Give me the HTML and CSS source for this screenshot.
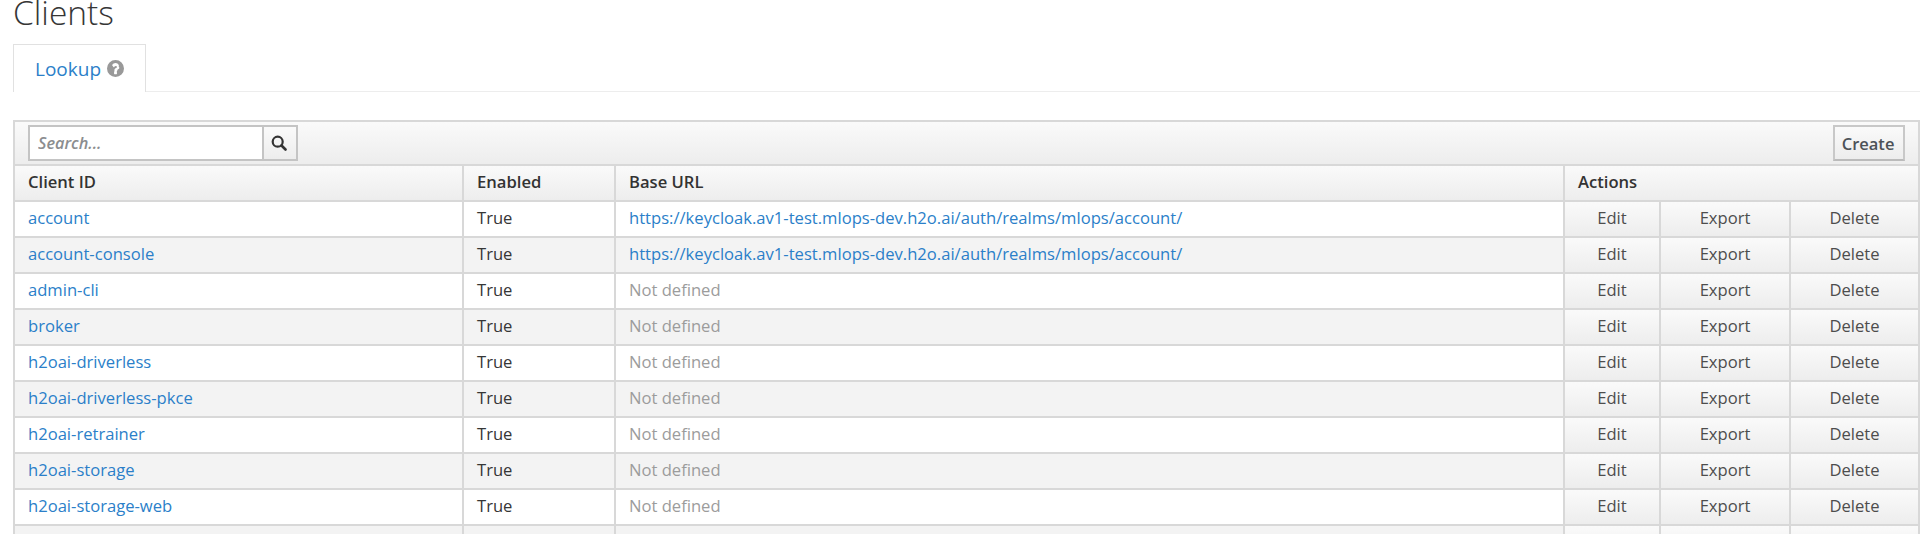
FILE: index.html
```html
<!DOCTYPE html>
<html lang="en">
<head>
<meta charset="utf-8">
<title>Clients</title>
<link rel="stylesheet" href="styles.css">
</head>
<body>
<h1 class="title">Clients</h1>
<ul class="tabs">
  <li class="tab"><a class="tab-link" href="#">Lookup</a>
    <svg class="help" viewBox="0 0 1536 1536" width="17" height="17"><path fill="#999" d="M768 0a768 768 0 1 0 0 1536A768 768 0 0 0 768 0zm128 1248q0 14-9 23t-23 9H672q-14 0-23-9t-9-23v-192q0-14 9-23t23-9h192q14 0 23 9t9 23v192zm228-537q-14 42-45 76t-67 56q-37 22-62 49t-22 48v36q0 14-9 23t-23 9H704q-14 0-23-9t-9-23v-68q0-62 47-113t103-77q42-19 60-40t18-54q0-30-33-53t-76-23q-46 0-77 21-25 18-76 82-9 11-22 11-9 0-17-5L467 478q-9-7-11-17t4-20q107-177 310-177 53 0 107 20t97 55q43 35 70 85t27 110q0 40-14 77z"/></svg>
  </li>
</ul>
<table class="grid">
  <colgroup>
    <col class="col-id"><col class="col-enabled"><col class="col-url"><col class="col-edit"><col class="col-export"><col class="col-delete">
  </colgroup>
  <thead>
    <tr class="toolbar-row">
      <th colspan="6">
        <div class="toolbar">
          <div class="search">
            <input class="search-input" type="text" placeholder="Search...">
            <button class="search-btn" type="button" aria-label="Search">
              <svg viewBox="0 0 16 16" width="16" height="16"><circle cx="6.7" cy="6.7" r="5" fill="none" stroke="#333" stroke-width="2.2"/><path d="M10.5 10.5l4 4" stroke="#333" stroke-width="2.6" stroke-linecap="round"/></svg>
            </button>
          </div>
          <button class="create" type="button">Create</button>
        </div>
      </th>
    </tr>
    <tr class="head-row">
      <th>Client ID</th><th>Enabled</th><th>Base URL</th><th colspan="3">Actions</th>
    </tr>
  </thead>
  <tbody>
    <tr><td><a href="#">account</a></td><td>True</td><td><a href="#">https://keycloak.av1-test.mlops-dev.h2o.ai/auth/realms/mlops/account/</a></td><td class="action">Edit</td><td class="action">Export</td><td class="action">Delete</td></tr>
    <tr><td><a href="#">account-console</a></td><td>True</td><td><a href="#">https://keycloak.av1-test.mlops-dev.h2o.ai/auth/realms/mlops/account/</a></td><td class="action">Edit</td><td class="action">Export</td><td class="action">Delete</td></tr>
    <tr><td><a href="#">admin-cli</a></td><td>True</td><td class="muted">Not defined</td><td class="action">Edit</td><td class="action">Export</td><td class="action">Delete</td></tr>
    <tr><td><a href="#">broker</a></td><td>True</td><td class="muted">Not defined</td><td class="action">Edit</td><td class="action">Export</td><td class="action">Delete</td></tr>
    <tr><td><a href="#">h2oai-driverless</a></td><td>True</td><td class="muted">Not defined</td><td class="action">Edit</td><td class="action">Export</td><td class="action">Delete</td></tr>
    <tr><td><a href="#">h2oai-driverless-pkce</a></td><td>True</td><td class="muted">Not defined</td><td class="action">Edit</td><td class="action">Export</td><td class="action">Delete</td></tr>
    <tr><td><a href="#">h2oai-retrainer</a></td><td>True</td><td class="muted">Not defined</td><td class="action">Edit</td><td class="action">Export</td><td class="action">Delete</td></tr>
    <tr><td><a href="#">h2oai-storage</a></td><td>True</td><td class="muted">Not defined</td><td class="action">Edit</td><td class="action">Export</td><td class="action">Delete</td></tr>
    <tr><td><a href="#">h2oai-storage-web</a></td><td>True</td><td class="muted">Not defined</td><td class="action">Edit</td><td class="action">Export</td><td class="action">Delete</td></tr>
    <tr class="cut-row"><td></td><td></td><td></td><td class="action"></td><td class="action"></td><td class="action"></td></tr>
  </tbody>
</table>
</body>
</html>
```

FILE: styles.css
```css
html, body {
  margin: 0;
  height: 534px;
  overflow: hidden;
  background: #fff;
}
body {
  padding: 0 2px 0 13px;
  font-family: "Open Sans", sans-serif;
  font-size: 16.6px;
  color: #363636;
}
a {
  color: #2b7fc9;
  text-decoration: none;
}
.title {
  margin: 0;
  font-size: 33.5px;
  line-height: 24px;
  font-weight: 300;
  color: #363636;
}
.tabs {
  list-style: none;
  margin: 20px -2px 0 0;
  padding: 0;
  height: 47px;
  border-bottom: 1px solid #ededed;
  display: flex;
}
.tab {
  box-sizing: border-box;
  height: 48px;
  width: 133px;
  display: flex;
  align-items: center;
  gap: 6px;
  padding-left: 21px;
  background: #fff;
  border: 1px solid #e1e1e1;
  border-bottom: none;
  font-size: 19px;
}
.help { display: block; }
.grid {
  box-sizing: border-box;
  margin-top: 28px;
  width: 1905px;
  table-layout: fixed;
  border-collapse: collapse;
  border: 2px solid #d1d1d1;
}
.col-id { width: 449px; }
.col-enabled { width: 152px; }
.col-url { width: 949px; }
.col-edit { width: 96px; }
.col-export { width: 130px; }
.col-delete { width: 129px; }
th, td {
  padding: 0 13px 2px;
  height: 36px;
  box-sizing: border-box;
  border: 2px solid #d8d8d8;
  text-align: left;
  font-weight: 400;
  line-height: 20px;
}
.toolbar-row th {
  height: 44px;
  padding: 0 13px;
  background: linear-gradient(#fafafa, #ededed);
}
.toolbar {
  display: flex;
  justify-content: space-between;
  align-items: center;
}
.search { display: flex; }
.search-input {
  box-sizing: border-box;
  width: 235px;
  height: 36px;
  padding: 0 8px;
  border: 2px solid #c4c4c4;
  border-right: 1px solid #c4c4c4;
  background: #fff;
  font: italic 600 16.3px "Open Sans", sans-serif;
  outline: none;
}
.search-input::placeholder { color: #8b8d8f; opacity: 1; }
.search-btn {
  box-sizing: border-box;
  width: 35px;
  height: 36px;
  padding: 0 2px 0 0;
  display: flex;
  align-items: center;
  justify-content: center;
  border: 2px solid #c4c4c4;
  border-left: 1px solid #c4c4c4;
  background: linear-gradient(#fafafa, #ededed);
}
.create {
  box-sizing: border-box;
  width: 72px;
  height: 36px;
  padding: 0 2px 0 0;
  border: 2px solid #c8c8c8;
  border-bottom-color: #bbb;
  background: linear-gradient(#fafafa, #ededed);
  font: 600 16.5px "Open Sans", sans-serif;
  color: #4d5258;
}
.head-row th {
  background: linear-gradient(#fafafa, #ededed);
  font-weight: 600;
  color: #333;
}
tbody tr:nth-child(even) td { background: #f3f3f3; }
td.action, tbody tr:nth-child(even) td.action {
  background: linear-gradient(#fafafa, #ededed);
  text-align: center;
  padding: 0 0 2px;
  color: #4d4d4d;
}
td.muted { color: #9c9c9c; }
```
